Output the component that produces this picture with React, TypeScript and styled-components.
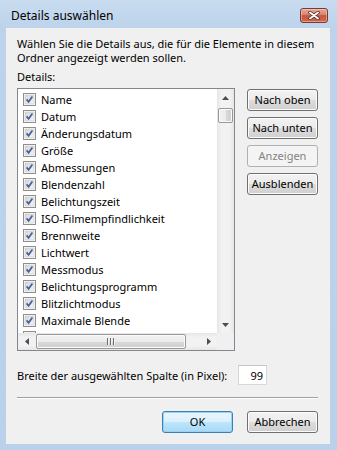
import React from 'react';
import styled, { createGlobalStyle, css } from 'styled-components';

const GlobalStyle = createGlobalStyle`
  html, body {
    margin: 0;
    padding: 0;
  }
  body {
    font-family: 'Noto Sans', 'Open Sans', sans-serif;
    font-size: 11px;
    color: #000;
  }
`;

const Window = styled.div`
  width: 337px;
  height: 450px;
  display: flex;
  flex-direction: column;
  background: linear-gradient(180deg, #c9dcf0 0px, #bcd3eb 28px, #b9d1ea 100%);
  box-sizing: border-box;
`;

const TitleBar = styled.div`
  height: 28px;
  flex-shrink: 0;
  display: flex;
  justify-content: space-between;
  align-items: flex-start;
  padding: 0 9px 0 11px;
  box-sizing: border-box;
`;

const Title = styled.div`
  font-size: 12px;
  line-height: 15px;
  margin-top: 8px;
`;

const CloseButton = styled.div`
  margin-top: 8px;
  width: 28px;
  height: 15px;
  box-sizing: border-box;
  border: 1px solid #7b3a2e;
  border-radius: 3px;
  background: linear-gradient(180deg, #e8a595 0%, #d98a78 40%, #c6553b 52%, #d0694f 100%);
  box-shadow: inset 0 0 0 1px rgba(255, 220, 210, 0.45);
  display: flex;
  align-items: center;
  justify-content: center;
`;

const Client = styled.div`
  flex: 1;
  margin: 0 7px 6px 6px;
  background: #f0f0f0;
  padding: 9px 12px 11px 11px;
  box-sizing: border-box;
  display: flex;
  flex-direction: column;
`;

const Intro = styled.p`
  margin: 0;
  line-height: 14px;
  white-space: nowrap;
`;

const Label = styled.div`
  margin-top: 5px;
  line-height: 14px;
`;

const Middle = styled.div`
  display: flex;
  gap: 12px;
  margin-top: 4px;
`;

const ListBox = styled.div`
  width: 218px;
  height: 263px;
  box-sizing: border-box;
  border: 1px solid #828790;
  background: #fff;
  display: grid;
  grid-template-columns: 1fr 17px;
  grid-template-rows: 1fr 17px;
`;

const Items = styled.div`
  overflow: hidden;
  padding: 2px 0 0 5px;
`;

const Row = styled.div`
  height: 17px;
  display: flex;
  align-items: center;
  gap: 5px;
  white-space: nowrap;
`;

const VScroll = styled.div`
  display: flex;
  flex-direction: column;
  background: linear-gradient(90deg, #e6e6e6 0%, #f2f2f2 25%, #f2f2f2 75%, #e6e6e6 100%);
`;

const HScroll = styled.div`
  display: flex;
  align-items: stretch;
  background: linear-gradient(180deg, #e6e6e6 0%, #f2f2f2 25%, #f2f2f2 75%, #e6e6e6 100%);
`;

const Corner = styled.div`
  background: #f0f0f0;
`;

const ArrowBtn = styled.div`
  width: 17px;
  height: 17px;
  flex-shrink: 0;
  display: flex;
  align-items: center;
  justify-content: center;
`;

const Track = styled.div<{ $dir: 'v' | 'h' }>`
  flex: 1;
  display: flex;
  flex-direction: ${(p) => (p.$dir === 'v' ? 'column' : 'row')};
`;

const thumbBase = css`
  box-sizing: border-box;
  border: 1px solid #979797;
  border-radius: 2px;
  box-shadow: inset 0 0 0 1px #fbfbfb;
`;

const VThumb = styled.div`
  ${thumbBase};
  margin: 2px 1px 0 1px;
  height: 15px;
  background: linear-gradient(90deg, #f2f2f2 0%, #ebebeb 50%, #d9d9d9 51%, #cfcfcf 100%);
`;

const HThumb = styled.div`
  ${thumbBase};
  margin: 1px 0 1px 1px;
  width: 150px;
  background: linear-gradient(180deg, #f2f2f2 0%, #ebebeb 50%, #d9d9d9 51%, #cfcfcf 100%);
  display: flex;
  align-items: center;
  justify-content: center;
`;

const Side = styled.div`
  display: flex;
  flex-direction: column;
  gap: 6px;
  margin-top: 1px;
`;

type BtnProps = { $default?: boolean; $disabled?: boolean };

const Button = styled.div<BtnProps>`
  width: 71px;
  height: 22px;
  box-sizing: border-box;
  border: 1px solid #707070;
  border-radius: 3px;
  background: linear-gradient(180deg, #f2f2f2 0%, #ebebeb 50%, #dddddd 51%, #cfcfcf 100%);
  box-shadow: inset 0 0 0 1px #fcfcfc;
  display: flex;
  align-items: center;
  justify-content: center;
  line-height: 14px;
  white-space: nowrap;
  ${(p) =>
    p.$default &&
    css`
      border-color: #3c7fb1;
      background: linear-gradient(180deg, #eaf6fd 0%, #d9f0fc 50%, #bee6fd 51%, #a7d9f5 100%);
      box-shadow: inset 0 0 0 1px #9ed1ef;
    `}
  ${(p) =>
    p.$disabled &&
    css`
      border-color: #adb2b5;
      background: #f4f4f4;
      box-shadow: none;
      color: #838383;
    `}
`;

const WidthRow = styled.div`
  display: flex;
  align-items: center;
  justify-content: space-between;
  margin-top: 14px;
  padding-right: 51px;
`;

const NumberBox = styled.div`
  width: 29px;
  height: 20px;
  box-sizing: border-box;
  background: #fff;
  border: 1px solid #d8d8d8;
  border-top-color: #c6c6c6;
  display: flex;
  align-items: center;
  justify-content: flex-end;
  padding-right: 3px;
`;

const Separator = styled.div`
  margin-top: 12px;
  height: 1px;
  background: #a0a0a0;
  border-bottom: 1px solid #fff;
`;

const Footer = styled.div`
  display: flex;
  justify-content: flex-end;
  gap: 14px;
  margin-top: 12px;
`;

const details = [
  'Name',
  'Datum',
  'Änderungsdatum',
  'Größe',
  'Abmessungen',
  'Blendenzahl',
  'Belichtungszeit',
  'ISO-Filmempfindlichkeit',
  'Brennweite',
  'Lichtwert',
  'Messmodus',
  'Belichtungsprogramm',
  'Blitzlichtmodus',
  'Maximale Blende',
];

const CheckBox = () => (
  <svg width="13" height="13" viewBox="0 0 13 13">
    <defs>
      <linearGradient id="cbfill" x1="0" y1="0" x2="1" y2="1">
        <stop offset="0" stopColor="#d3d6da" />
        <stop offset="1" stopColor="#f6f6f6" />
      </linearGradient>
    </defs>
    <rect x="0.5" y="0.5" width="12" height="12" fill="#fff" stroke="#8e8f8f" />
    <rect x="2" y="2" width="9" height="9" fill="url(#cbfill)" stroke="#c4c4c4" strokeWidth="0.6" />
    <path d="M3.6 6.4 L5.6 8.8 L9.4 3.4" fill="none" stroke="#4a5f97" strokeWidth="1.7" />
  </svg>
);

const Arrow = ({ dir }: { dir: 'up' | 'down' | 'left' | 'right' }) => {
  const pts = {
    up: '0,4 7,4 3.5,0',
    down: '0,0 7,0 3.5,4',
    left: '4,0 4,7 0,3.5',
    right: '0,0 0,7 4,3.5',
  }[dir];
  const v = dir === 'up' || dir === 'down';
  return (
    <svg width={v ? 7 : 4} height={v ? 4 : 7} viewBox={v ? '0 0 7 4' : '0 0 4 7'}>
      <polygon points={pts} fill="#4d4d4d" />
    </svg>
  );
};

const Grip = () => (
  <svg width="8" height="7" viewBox="0 0 8 7">
    {[0, 3, 6].map((x) => (
      <g key={x}>
        <rect x={x} y="0" width="1" height="7" fill="#6b6b6b" />
        <rect x={x + 1} y="0" width="1" height="7" fill="#f4f4f4" />
      </g>
    ))}
  </svg>
);

export default function App() {
  return (
    <>
      <GlobalStyle />
      <Window>
        <TitleBar>
          <Title>Details auswählen</Title>
          <CloseButton>
            <svg width="12" height="9" viewBox="0 0 12 9">
              <path d="M2 1.5 L10 7.5 M10 1.5 L2 7.5" stroke="#4a2a26" strokeWidth="3.4" strokeLinecap="round" />
              <path d="M2 1.5 L10 7.5 M10 1.5 L2 7.5" stroke="#fff" strokeWidth="1.9" strokeLinecap="round" />
            </svg>
          </CloseButton>
        </TitleBar>
        <Client>
          <Intro>
            Wählen Sie die Details aus, die für die Elemente in diesem
            <br />
            Ordner angezeigt werden sollen.
          </Intro>
          <Label>Details:</Label>
          <Middle>
            <ListBox>
              <Items>
                {details.map((d) => (
                  <Row key={d}>
                    <CheckBox />
                    <span>{d}</span>
                  </Row>
                ))}
                {/* next row, only the top of its box shows above the scrollbar */}
                <Row>
                  <CheckBox />
                </Row>
              </Items>
              <VScroll>
                <ArrowBtn>
                  <Arrow dir="up" />
                </ArrowBtn>
                <Track $dir="v">
                  <VThumb />
                </Track>
                <ArrowBtn>
                  <Arrow dir="down" />
                </ArrowBtn>
              </VScroll>
              <HScroll>
                <ArrowBtn>
                  <Arrow dir="left" />
                </ArrowBtn>
                <Track $dir="h">
                  <HThumb>
                    <Grip />
                  </HThumb>
                </Track>
                <ArrowBtn>
                  <Arrow dir="right" />
                </ArrowBtn>
              </HScroll>
              <Corner />
            </ListBox>
            <Side>
              <Button>Nach oben</Button>
              <Button>Nach unten</Button>
              <Button $disabled>Anzeigen</Button>
              <Button>Ausblenden</Button>
            </Side>
          </Middle>
          <WidthRow>
            <span>Breite der ausgewählten Spalte (in Pixel):</span>
            <NumberBox>99</NumberBox>
          </WidthRow>
          <Separator />
          <Footer>
            <Button $default>OK</Button>
            <Button>Abbrechen</Button>
          </Footer>
        </Client>
      </Window>
    </>
  );
}
